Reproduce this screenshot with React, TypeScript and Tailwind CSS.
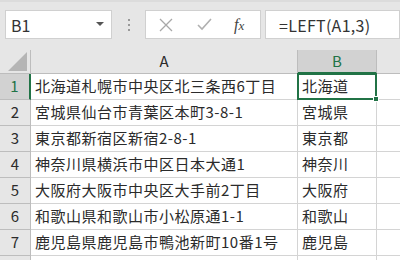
const ROWS = [
  ["北海道札幌市中央区北三条西6丁目", "北海道"],
  ["宮城県仙台市青葉区本町3-8-1", "宮城県"],
  ["東京都新宿区新宿2-8-1", "東京都"],
  ["神奈川県横浜市中区日本大通1", "神奈川"],
  ["大阪府大阪市中央区大手前2丁目", "大阪府"],
  ["和歌山県和歌山市小松原通1-1", "和歌山"],
  ["鹿児島県鹿児島市鴨池新町10番1号", "鹿児島"],
];

const font = "font-['Noto_Sans_CJK_JP','Noto_Sans',sans-serif]";

function FormulaBar() {
  return (
    <div className="flex h-[50px] items-start border-t-2 border-[#dcdcdc] bg-[#e6e6e6] pt-[8px] pl-[5px]">
      <div className="flex h-[29px] w-[107px] items-center justify-between border border-[#d0d0d0] bg-white pl-[5px] pr-[7px]">
        <span className="text-[16px] text-[#333]">B1</span>
        <svg width="8" height="5" viewBox="0 0 8 5">
          <path d="M0 0h8L4 4z" fill="#555" />
        </svg>
      </div>
      <div className="flex h-[29px] w-[33px] flex-col items-center justify-center gap-[3px]">
        <span className="h-[2px] w-[2px] bg-[#999]" />
        <span className="h-[2px] w-[2px] bg-[#999]" />
        <span className="h-[2px] w-[2px] bg-[#999]" />
      </div>
      <div className="flex h-[29px] w-[116px] items-center border border-[#d0d0d0] bg-white">
        <svg className="ml-[13px]" width="14" height="14" viewBox="0 0 14 14">
          <path d="M1 1l12 12M13 1L1 13" stroke="#a8a8a8" strokeWidth="1.3" />
        </svg>
        <svg className="ml-[24px]" width="15" height="13" viewBox="0 0 15 13">
          <path d="M1 7l4 4 9-10" stroke="#b0b0b0" strokeWidth="1.6" fill="none" />
        </svg>
        <span className="ml-[22px] font-['Liberation_Serif',serif] text-[16px] italic text-[#444]">
          f<span className="text-[13px]">x</span>
        </span>
      </div>
      <div className="ml-[4px] flex h-[29px] flex-1 items-center border border-[#d0d0d0] bg-white pl-[13px]">
        <span className="text-[16px] tracking-[0.3px] text-[#333]">=LEFT(A1,3)</span>
      </div>
    </div>
  );
}

export default function App() {
  return (
    <div className={`h-[260px] w-[400px] overflow-hidden bg-white ${font}`}>
      <FormulaBar />
      <div className="grid grid-cols-[31px_267px_79px_1fr] grid-rows-[24px_repeat(8,26px)]">
        <div className="relative border-r border-b border-[#bdbdbd] bg-[#e6e6e6]">
          <svg className="absolute right-[3px] bottom-[2px]" width="19" height="19" viewBox="0 0 19 19">
            <path d="M19 0v19H0z" fill="#b5b5b5" />
          </svg>
        </div>
        <div className="flex items-center justify-center border-r border-b border-[#bdbdbd] bg-[#e6e6e6] text-[15px] text-[#2b2b2b]">
          A
        </div>
        <div className="flex items-center justify-center border-r border-b-2 border-r-[#bdbdbd] border-b-[#217346] bg-[#d2d2d2] text-[15px] text-[#217346]">
          B
        </div>
        <div className="border-b border-[#bdbdbd] bg-[#e6e6e6]" />
        {ROWS.map(([a, b], i) => (
          <Row key={i} n={i + 1} a={a} b={b} selected={i === 0} />
        ))}
        <div className="border-r border-[#bdbdbd] bg-[#e6e6e6]" />
        <div className="border-r border-[#d4d4d4]" />
        <div className="border-r border-[#d4d4d4]" />
        <div />
      </div>
    </div>
  );
}

function Row({ n, a, b, selected }: { n: number; a: string; b: string; selected: boolean }) {
  return (
    <>
      <div
        className={
          selected
            ? "flex items-center justify-center border-r-2 border-b border-r-[#217346] border-b-[#bdbdbd] bg-[#d2d2d2] text-[15px] text-[#217346]"
            : "flex items-center justify-center border-r border-b border-[#bdbdbd] bg-[#e6e6e6] text-[15px] text-[#2b2b2b]"
        }
      >
        {n}
      </div>
      <div className="flex items-center overflow-hidden whitespace-nowrap border-r border-b border-[#d4d4d4] pl-[4px] text-[15px] tracking-[0.5px] text-[#2b2b2b]">
        {a}
      </div>
      <div
        className={
          selected
            ? "relative -mt-px -ml-px flex items-center border-2 border-[#217346] pl-[3px] text-[15px] tracking-[0.5px] text-[#2b2b2b]"
            : "flex items-center border-r border-b border-[#d4d4d4] pl-[4px] text-[15px] tracking-[0.5px] text-[#2b2b2b]"
        }
      >
        {b}
        {selected && (
          <span className="absolute -right-[4px] -bottom-[4px] h-[6px] w-[6px] border border-white bg-[#217346]" />
        )}
      </div>
      <div className="border-b border-[#d4d4d4]" />
    </>
  );
}
